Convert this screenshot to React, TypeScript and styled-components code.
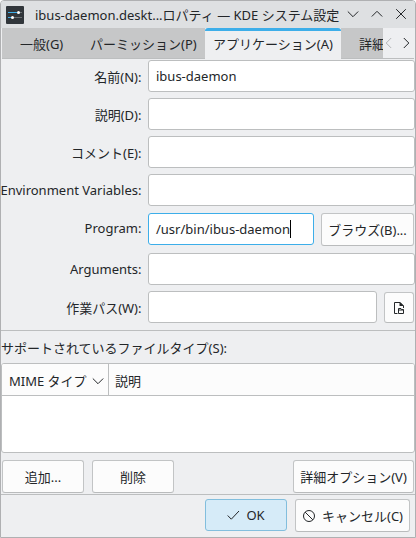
import React from 'react';
import styled, { createGlobalStyle, css } from 'styled-components';

const GlobalStyle = createGlobalStyle`
  * { box-sizing: border-box; }
  body { margin: 0; overflow: hidden; }
`;

const ink = '#232629';
const line = '#bcbebf';

const Window = styled.div`
  width: 416px;
  height: 538px;
  display: flex;
  flex-direction: column;
  background: #eeeff1;
  border: 1px solid #afb0b2;
  border-radius: 4px 4px 0 0;
  color: ${ink};
  font: 13px/18px 'Noto Sans', 'Noto Sans CJK JP', sans-serif;
  white-space: nowrap;
`;

const TitleBar = styled.header`
  height: 27px;
  flex: none;
  display: flex;
  align-items: center;
  padding-left: 5px;
  background: #dee0e2;
  border-radius: 3px 3px 0 0;
  svg { flex: none; }
`;

const Title = styled.div`
  width: 311px;
  flex: none;
  margin-left: 11px;
`;

const WindowControls = styled.div`
  display: flex;
  gap: 12px;
  margin: -1px 0 0 1px;
`;

const TabBar = styled.nav`
  height: 32px;
  flex: none;
  display: flex;
  padding-left: 1px;
  padding-right: 1px;
`;

const Tab = styled.div<{ $width: number; $active?: boolean; $indent: number }>`
  width: ${(p) => p.$width}px;
  height: 31px;
  flex: none;
  overflow: hidden;
  padding: 7px 0 0 ${(p) => p.$indent}px;
  background: #c6c7c8;
  border-bottom: 1px solid ${line};
  ${(p) =>
    p.$active &&
    css`
      padding-top: 4px;
      background: #eeeff1;
      border-top: 3px solid #3daee9;
      border-bottom: 0;
      border-radius: 3px 3px 0 0;
    `}
`;

const TabScroll = styled.div`
  flex: 1;
  height: 31px;
  display: flex;
  align-items: center;
  gap: 5px;
  border-bottom: 1px solid ${line};
  svg { flex: none; }
`;

const Form = styled.form`
  height: 271px;
  flex: none;
  border-bottom: 1px solid ${line};
`;

const Row = styled.div<{ $gap?: number }>`
  display: flex;
  height: 32px;
  margin-bottom: ${(p) => p.$gap ?? 6}px;
`;

const Label = styled.label<{ $lift?: number }>`
  width: 147px;
  flex: none;
  display: flex;
  justify-content: flex-end;
  padding-top: ${(p) => 8 - (p.$lift ?? 0)}px;
  padding-right: 6.5px;
`;

const Field = styled.div<{ $width?: number; $focus?: boolean }>`
  width: ${(p) => p.$width ?? 267}px;
  height: 32px;
  flex: none;
  display: flex;
  align-items: center;
  padding-left: 7px;
  background: #fff;
  border: 1px solid ${(p) => (p.$focus ? '#3daee9' : line)};
  border-radius: 3px;
`;

const Caret = styled.span`
  width: 1px;
  height: 18px;
  background: #000;
`;

const Button = styled.button<{ $width: number; $height?: number; $primary?: boolean }>`
  width: ${(p) => p.$width}px;
  height: ${(p) => p.$height ?? 33}px;
  flex: none;
  display: flex;
  align-items: center;
  justify-content: center;
  padding: 0;
  font: inherit;
  color: inherit;
  background: ${(p) => (p.$primary ? '#d6ebf8' : '#fcfcfc')};
  border: 1px solid ${(p) => (p.$primary ? '#82bedd' : '#c2c4c5')};
  border-bottom-color: ${(p) => (p.$primary ? '#82bedd' : '#b9bbbc')};
  border-radius: 3px;
  svg { flex: none; }
`;

const BrowseButton = styled(Button)`margin-left: 7px;`;
const FolderButton = styled(Button)`margin: 1px 0 0 7px;`;

const ListLabel = styled.div`
  height: 32px;
  flex: none;
  padding-top: 8px;
`;

const List = styled.section`
  height: 90px;
  flex: none;
  background: #fff;
  border: 1px solid ${line};
  border-radius: 3px;
  overflow: hidden;
`;

const ListHeader = styled.div`
  height: 32px;
  display: flex;
  background: #fcfcfc;
  border-bottom: 1px solid ${line};
`;

const Column = styled.div<{ $width: number; $divided?: boolean }>`
  width: ${(p) => p.$width}px;
  display: flex;
  align-items: center;
  justify-content: space-between;
  padding: 3px 4px 0 ${(p) => (p.$divided ? 7 : 6)}px;
  border-right: ${(p) => (p.$divided ? `1px solid ${line}` : '0')};
`;

const ListActions = styled.div`
  height: 42px;
  flex: none;
  display: flex;
  gap: 8px;
  padding: 7px 1px 0;
  border-bottom: 1px solid ${line};
  button:last-child { margin-left: auto; }
`;

const DialogActions = styled.footer`
  display: flex;
  gap: 8px;
  justify-content: flex-end;
  padding: 4px 5px 0 0;
`;

const ButtonText = styled.span<{ $gap?: number; $drop?: number }>`
  margin-left: ${(p) => p.$gap ?? 0}px;
  padding-top: ${(p) => p.$drop ?? 0}px;
`;

const Chevron = ({ d, color = ink }: { d: string; color?: string }) => (
  <svg width="12" height="12" viewBox="0 0 12 12" fill="none" stroke={color} strokeWidth="1">
    <path d={d} />
  </svg>
);

const arrows = {
  down: 'M.8 3.5 6 8.7l5.2-5.2',
  up: 'M.8 8.5 6 3.3l5.2 5.2',
  left: 'M8.2 1 3.2 6l5 5',
  right: 'M3.8 1 8.8 6l-5 5',
  close: 'M1.2 1.2l9.6 9.6M10.8 1.2 1.2 10.8',
};

const SettingsIcon = () => (
  <svg width="18" height="18" viewBox="0 0 18 18">
    <rect width="18" height="18" rx="1" fill="#31363b" />
    <path d="M2 6.5h9" stroke="#3daee9" />
    <path d="M13 6.5h3" stroke="#6c7174" />
    <circle cx="12.5" cy="6.5" r="1.5" fill="#fff" />
    <path d="M2 11.5h4" stroke="#3daee9" />
    <path d="M7 11.5h9" stroke="#6c7174" />
    <circle cx="6.5" cy="11.5" r="1.5" fill="#fff" />
  </svg>
);

const DocumentFolderIcon = () => (
  <svg width="12" height="14" viewBox="0 0 12 14" fill="none" stroke={ink}>
    <path d="M4.5 12.5h-3v-11H7L10.5 5v2" />
    <path d="M6.5 1v4H11L7 1Z" fill={ink} stroke="none" />
    <path d="M5.5 12.5v-5H8l.5 1h2v4Z" />
    <path d="M5.5 9h5" />
  </svg>
);

const CheckIcon = () => (
  <svg width="13" height="12" viewBox="0 0 13 12" fill="none" stroke={ink} strokeWidth="1">
    <path d="m.7 6.5 3.6 3.7L12 2" />
  </svg>
);

const CancelIcon = () => (
  <svg width="14" height="14" viewBox="0 0 14 14" fill="none" stroke={ink} strokeWidth="1">
    <circle cx="7" cy="7" r="5.5" />
    <path d="m3.1 3.1 7.8 7.8" />
  </svg>
);

export default function App() {
  return (
    <>
      <GlobalStyle />
      <Window>
        <TitleBar>
          <SettingsIcon />
          <Title>ibus-daemon.deskt...ロパティ — KDE システム設定</Title>
          <WindowControls>
            <Chevron d={arrows.down} />
            <Chevron d={arrows.up} />
            <Chevron d={arrows.close} />
          </WindowControls>
        </TitleBar>
        <TabBar>
          <Tab $width={70} $indent={18}>一般(G)</Tab>
          <Tab $width={133} $indent={18}>パーミッション(P)</Tab>
          <Tab $width={136} $indent={8} $active>アプリケーション(A)</Tab>
          <Tab $width={42} $indent={18}>詳細</Tab>
          <TabScroll>
            <Chevron d={arrows.left} color="#b4b6b8" />
            <Chevron d={arrows.right} />
          </TabScroll>
        </TabBar>
        <Form>
          <Row><Label>名前(N):</Label><Field>ibus-daemon</Field></Row>
          <Row><Label>説明(D):</Label><Field /></Row>
          <Row><Label>コメント(E):</Label><Field /></Row>
          <Row $gap={7}><Label $lift={1}>Environment Variables:</Label><Field /></Row>
          <Row $gap={8}>
            <Label $lift={2}>Program:</Label>
            <Field $width={166} $focus>/usr/bin/ibus-daemon<Caret /></Field>
            <BrowseButton type="button" $width={93}><ButtonText $drop={1}>ブラウズ(B)...</ButtonText></BrowseButton>
          </Row>
          <Row><Label $lift={1}>Arguments:</Label><Field /></Row>
          <Row $gap={0}>
            <Label $lift={0.5}>作業パス(W):</Label>
            <Field $width={229} />
            <FolderButton type="button" $width={30} $height={31}><DocumentFolderIcon /></FolderButton>
          </Row>
        </Form>
        <ListLabel>サポートされているファイルタイプ(S):</ListLabel>
        <List>
          <ListHeader>
            <Column $width={107} $divided>MIME タイプ<Chevron d={arrows.down} /></Column>
            <Column $width={290}>説明</Column>
          </ListHeader>
        </List>
        <ListActions>
          <Button $width={82}><ButtonText>追加...</ButtonText></Button>
          <Button $width={82}><ButtonText>削除</ButtonText></Button>
          <Button $width={121}><ButtonText $drop={1}>詳細オプション(V)</ButtonText></Button>
        </ListActions>
        <DialogActions>
          <Button $width={82} $height={32} $primary><CheckIcon /><ButtonText $gap={6}>OK</ButtonText></Button>
          <Button $width={115}><CancelIcon /><ButtonText $gap={6} $drop={1}>キャンセル(C)</ButtonText></Button>
        </DialogActions>
      </Window>
    </>
  );
}
